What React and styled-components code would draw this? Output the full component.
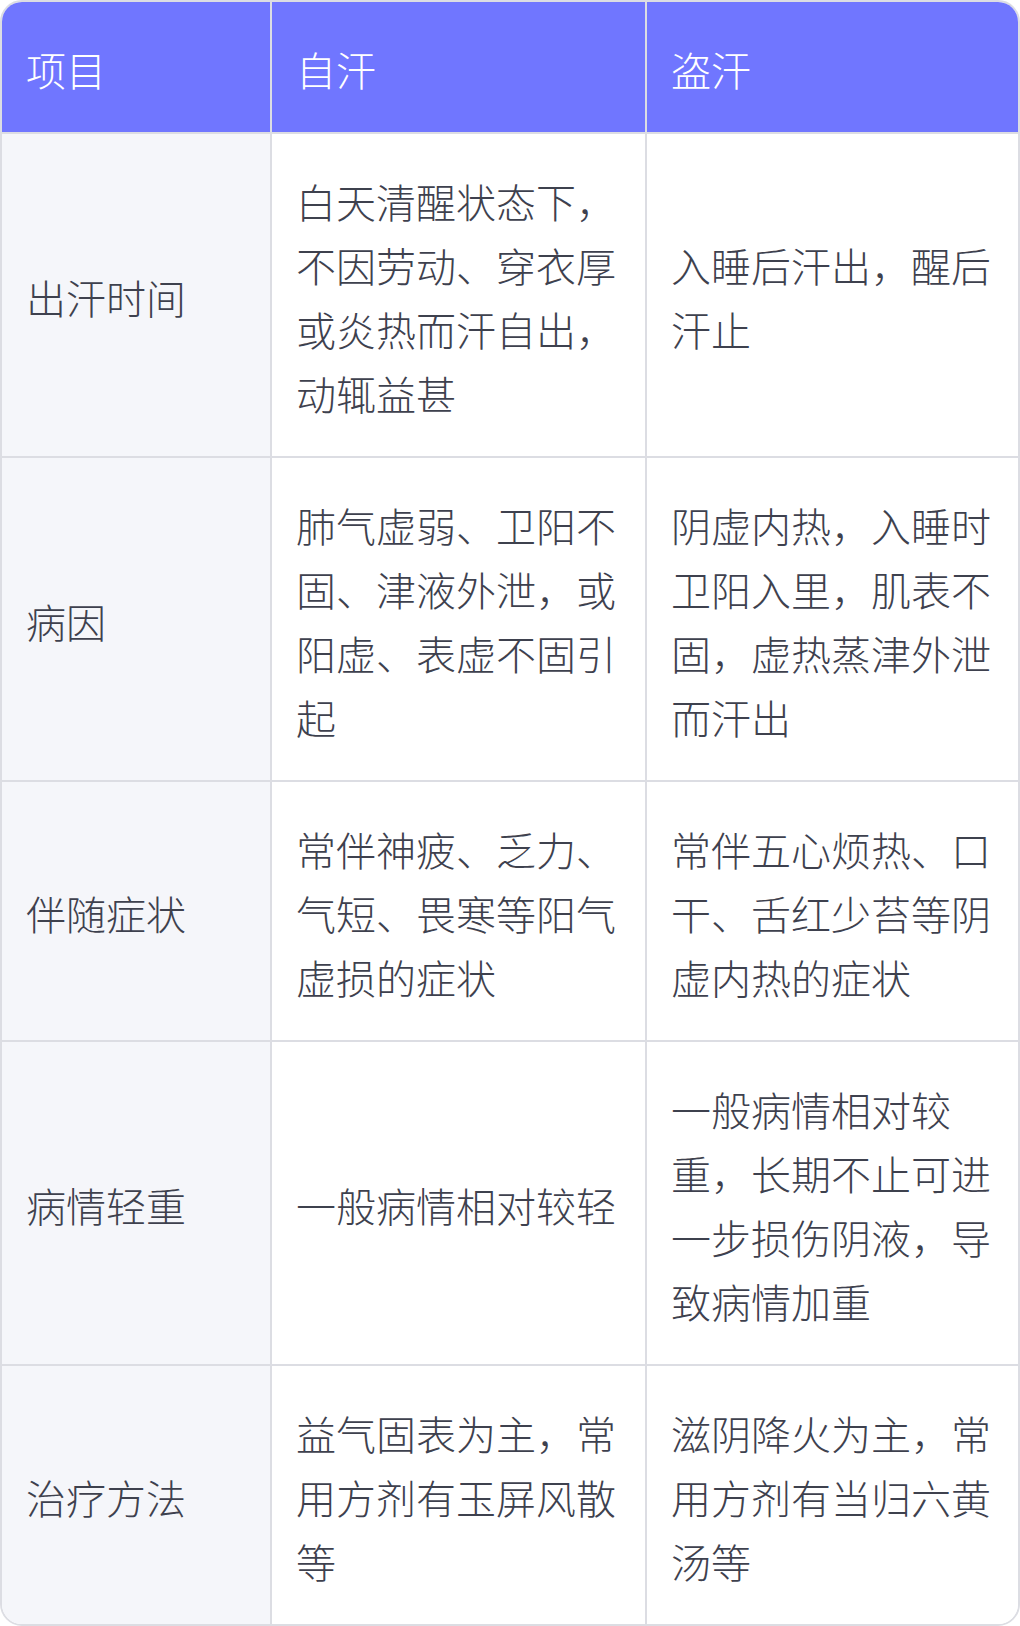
import React from "react";
import styled, { createGlobalStyle } from "styled-components";

const GlobalStyle = createGlobalStyle`
  html, body {
    margin: 0;
    padding: 0;
    background: #ffffff;
  }
  body {
    font-family: "Noto Sans CJK SC", "Noto Sans", sans-serif;
  }
`;

const Frame = styled.div`
  width: 1020px;
  box-sizing: border-box;
  border: 2px solid #dcdde3;
  border-radius: 22px;
  overflow: hidden;
`;

const Table = styled.table`
  width: 100%;
  border-collapse: separate;
  border-spacing: 0;
  table-layout: fixed;
  font-family: "Noto Sans CJK SC", "Noto Sans", sans-serif;
  font-size: 40px;
  line-height: 64px;
`;

const Cell = styled.td`
  box-sizing: border-box;
  padding: 35px 24px 31px;
  vertical-align: middle;
  text-align: left;
  font-weight: 300;
  color: ${(p) => (p.$head ? "#ffffff" : "#3e414e")};
  background: ${(p) => (p.$head ? "#7076ff" : p.$label ? "#f5f6fa" : "#ffffff")};
  border-right: ${(p) => (p.$last ? "none" : "2px solid #dcdde3")};
  border-bottom: ${(p) => (p.$end ? "none" : "2px solid #dcdde3")};
  word-break: break-all;
`;

const columns = [
  { key: "item", title: "项目", width: 270 },
  { key: "zihan", title: "自汗", width: 375 },
  { key: "daohan", title: "盗汗", width: 371 },
];

const rows = [
  {
    item: "出汗时间",
    zihan: "白天清醒状态下，不因劳动、穿衣厚或炎热而汗自出，动辄益甚",
    daohan: "入睡后汗出，醒后汗止",
  },
  {
    item: "病因",
    zihan: "肺气虚弱、卫阳不固、津液外泄，或阳虚、表虚不固引起",
    daohan: "阴虚内热，入睡时卫阳入里，肌表不固，虚热蒸津外泄而汗出",
  },
  {
    item: "伴随症状",
    zihan: "常伴神疲、乏力、气短、畏寒等阳气虚损的症状",
    daohan: "常伴五心烦热、口干、舌红少苔等阴虚内热的症状",
  },
  {
    item: "病情轻重",
    zihan: "一般病情相对较轻",
    daohan: "一般病情相对较重，长期不止可进一步损伤阴液，导致病情加重",
  },
  {
    item: "治疗方法",
    zihan: "益气固表为主，常用方剂有玉屏风散等",
    daohan: "滋阴降火为主，常用方剂有当归六黄汤等",
  },
];

const App = () => {
  return (
    <>
      <GlobalStyle />
      <Frame>
        <Table>
          <colgroup>
            {columns.map((c) => (
              <col key={c.key} style={{ width: c.width }} />
            ))}
          </colgroup>
          <thead>
            <tr>
              {columns.map((c, i) => (
                <Cell as="th" key={c.key} $head $last={i === columns.length - 1}>
                  {c.title}
                </Cell>
              ))}
            </tr>
          </thead>
          <tbody>
            {rows.map((r, ri) => (
              <tr key={r.item}>
                {columns.map((c, i) => (
                  <Cell
                    key={c.key}
                    $label={i === 0}
                    $last={i === columns.length - 1}
                    $end={ri === rows.length - 1}
                  >
                    {r[c.key]}
                  </Cell>
                ))}
              </tr>
            ))}
          </tbody>
        </Table>
      </Frame>
    </>
  );
};

export default App;
